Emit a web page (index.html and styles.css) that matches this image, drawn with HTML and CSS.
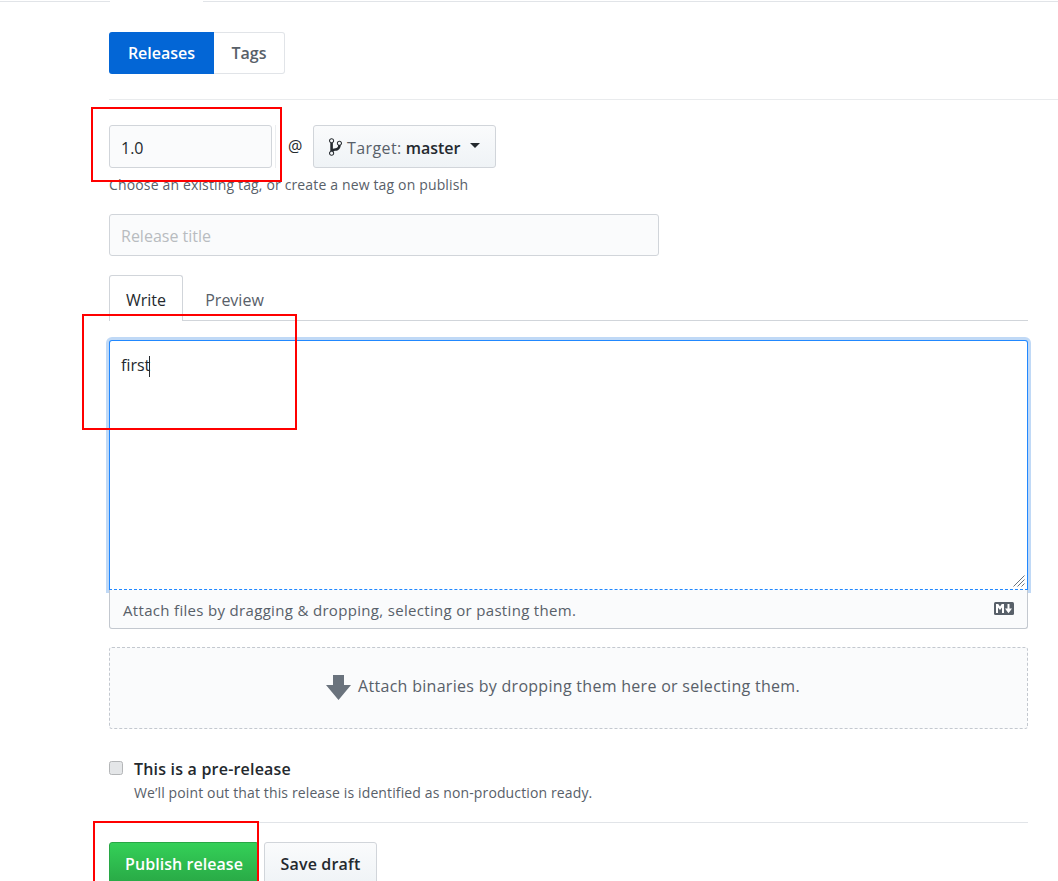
FILE: index.html
```html
<!DOCTYPE html>
<html lang="en">
<head>
<meta charset="utf-8">
<title>New release</title>
<link rel="stylesheet" href="styles.css">
</head>
<body>
<div class="topline"><span class="topline-gap"></span></div>
<main class="page">
  <nav class="subnav">
    <a class="subnav-item selected">Releases</a>
    <a class="subnav-item">Tags</a>
  </nav>
  <hr class="rule-wide">
  <div class="tag-row">
    <input class="field tag-input" value="1.0">
    <span class="tag-sep"></span>
    <span class="at">@</span>
    <button class="btn target">
      <svg class="branch" width="13" height="20" viewBox="0 0 10 16" preserveAspectRatio="none"><path fill="#24292e" fill-rule="evenodd" d="M10 5c0-1.11-.89-2-2-2a1.993 1.993 0 0 0-1 3.72v.3c-.02.52-.23.98-.63 1.38-.4.4-.86.61-1.38.63-.83.02-1.48.16-2 .45V4.72a1.993 1.993 0 0 0-1-3.72C.88 1 0 1.89 0 3a2 2 0 0 0 1 1.72v6.56c-.59.35-1 .99-1 1.72 0 1.11.89 2 2 2 1.11 0 2-.89 2-2 0-.53-.2-1-.53-1.36.09-.06.48-.41.59-.47.25-.11.56-.17.94-.17 1.05-.05 1.95-.45 2.75-1.25S8.95 7.77 9 6.73h-.02C9.59 6.37 10 5.73 10 5zM2 1.8c.66 0 1.2.55 1.2 1.2 0 .65-.55 1.2-1.2 1.2C1.35 4.2.8 3.65.8 3c0-.65.55-1.2 1.2-1.2zm0 12.41c-.66 0-1.2-.55-1.2-1.2 0-.65.55-1.2 1.2-1.2.65 0 1.2.55 1.2 1.2 0 .65-.55 1.2-1.2 1.2zm6-8c-.66 0-1.2-.55-1.2-1.2 0-.65.55-1.2 1.2-1.2.65 0 1.2.55 1.2 1.2 0 .65-.55 1.2-1.2 1.2z"/></svg>
      <span class="target-label">Target:</span><span class="target-name">master</span>
      <span class="caret"></span>
    </button>
  </div>
  <p class="hint">Choose an existing tag, or create a new tag on publish</p>
  <input class="field title-input" placeholder="Release title">
  <div class="tabs">
    <span class="tab active">Write</span>
    <span class="tab">Preview</span>
  </div>
  <div class="editor">
    <div class="textarea"><span class="typed">first</span><span class="cursor"></span>
      <svg class="grip" width="12" height="12" viewBox="0 0 12 12"><path d="M11.5 .5 .5 11.5M11.5 4.5 4.5 11.5M11.5 8.5 8.5 11.5" stroke="#6a737d" stroke-width="1" fill="none"/></svg>
    </div>
    <div class="attach">
      <span>Attach files by dragging &amp; dropping, selecting or pasting them.</span>
      <svg class="md" width="20" height="13" viewBox="0 0 20 13"><rect width="20" height="13" rx="1.5" fill="#586069"/><path fill="#fff" d="M2 11V2h2.2L6 4.6 7.8 2H10v9H8V5.4L6 8 4 5.4V11zM13.5 2h2v4.5H18l-3.5 4.7L11 6.5h2.500z"/></svg>
    </div>
  </div>
  <div class="dropzone">
    <svg class="arrow" width="25" height="25" viewBox="0 0 25 25"><path fill="#6a737d" d="M7 0h11v10h7L12.500 25 0 10h7z"/></svg>
    <span class="drop-text">Attach binaries by dropping them here or selecting them.</span>
  </div>
  <div class="prerelease">
    <span class="checkbox"></span>
    <div>
      <div class="pre-title">This is a pre-release</div>
      <div class="pre-note">We’ll point out that this release is identified as non-production ready.</div>
    </div>
  </div>
  <hr class="rule">
  <div class="actions">
    <button class="btn publish">Publish release</button>
    <button class="btn draft">Save draft</button>
  </div>
</main>
<div class="mark mark-tag"></div>
<div class="mark mark-body"></div>
<div class="mark mark-publish"></div>
</body>
</html>
```
FILE: styles.css
```css
* { box-sizing: border-box; }
html, body { margin: 0; height: 881px; overflow: hidden; background: #fff; }
body { font-family: "Open Sans", "Noto Sans", sans-serif; font-size: 16px; color: #24292e; position: relative; }

.topline { height: 2px; border-bottom: 1px solid #e1e4e8; padding-left: 110px; }
.topline-gap { display: block; width: 93px; height: 2px; background: #fff; }

.page { margin-left: 109px; width: 919px; padding-top: 30px; }

.subnav { display: flex; width: 176px; height: 42px; }
.subnav-item { display: flex; align-items: center; justify-content: center; font-size: 16px; font-weight: 600; color: #586069; border: 1px solid #e1e4e8; border-left: 0; border-radius: 0 3px 3px 0; width: 71px; }
.subnav-item.selected { width: 105px; background: #0366d6; border: 0; border-radius: 3px 0 0 3px; color: #fff; }

.rule-wide { margin: 25px 0 0; width: 949px; height: 1px; border: 0; background: #e9ebed; }
.rule { margin: 0; height: 1px; border: 0; background: #e1e4e8; }

.tag-row { display: flex; margin-top: 25px; height: 43px; align-items: stretch; }
.field { display: block; font: inherit; font-size: 16px; color: #24292e; background: #fafbfc; border: 1px solid #d1d5da; border-radius: 3px; padding: 2px 11px 0; outline: none; }
.field::placeholder { color: #b8bcc0; opacity: 1; }
.tag-input { width: 163px; }
.tag-sep { width: 1px; margin-left: 3px; background: #eceef0; }
.at { width: 37px; padding-left: 12px; font-size: 16px; line-height: 42px; }
.btn { font: inherit; font-weight: 600; font-size: 16px; border: 1px solid #d1d5da; border-radius: 3px; background: linear-gradient(#fafbfc, #eff3f6); color: #24292e; padding: 0; }
.target { width: 183px; display: flex; align-items: center; padding: 2px 0 0 15px; white-space: pre; }
.branch { margin-right: 5px; margin-top: -2px; }
.target-label { color: #586069; font-weight: 400; letter-spacing: .4px; margin-right: 4px; }
.target-name { color: #24292e; }
.caret { margin-left: 10px; margin-top: -4px; border-top: 5px solid #24292e; border-left: 5px solid transparent; border-right: 5px solid transparent; }

.hint { margin: 7px 0 0; font-size: 14px; line-height: 20px; letter-spacing: .15px; color: #586069; }

.title-input { margin-top: 19px; width: 550px; height: 42px; }

.tabs { display: flex; margin-top: 19px; height: 46px; border-bottom: 1px solid #d1d5da; }
.tab { display: flex; align-items: center; justify-content: center; height: 46px; font-size: 16px; color: #586069; width: 103px; padding-top: 4px; }
.tab.active { width: 74px; padding-top: 2px; color: #24292e; background: #fff; border: 1px solid #d1d5da; border-bottom: 0; border-radius: 3px 3px 0 0; }

.editor { margin-top: 19px; }
.textarea { position: relative; height: 250px; background: #fff; border: 1px solid #2188ff; border-bottom: 1px dashed #2188ff; border-radius: 3px 3px 0 0; box-shadow: 0 0 0 3px #c0d9f6; padding: 12px 11px; font-size: 16px; line-height: 24px; }
.cursor { display: inline-block; width: 1px; height: 21px; background: #24292e; vertical-align: middle; margin-left: -1px; }
.grip { position: absolute; right: 2px; bottom: 2px; }
.attach { position: relative; display: flex; align-items: center; justify-content: space-between; height: 39px; padding: 2px 13px 0 13px; background: #fafbfc; border: 1px solid #c3c8cf; border-top: 0; border-radius: 0 0 3px 3px; font-size: 15px; letter-spacing: .32px; color: #586069; }
.md { margin-top: -4px; }

.dropzone { display: flex; align-items: center; justify-content: center; gap: 7px; margin-top: 18px; height: 82px; padding-right: 11px; background: #fafbfc; border: 1px dashed #c3c8cf; border-radius: 3px; font-size: 16px; letter-spacing: .29px; color: #586069; }
.arrow { margin-top: -1px; }
.drop-text { margin-bottom: 4px; }

.prerelease { display: flex; margin-top: 29px; height: 64px; }
.checkbox { width: 14px; height: 14px; margin: 3px 11px 0 0; flex: none; background: #e4e6e8; border: 1px solid #b4b6b8; border-radius: 2.5px; }
.pre-title { font-size: 16px; font-weight: 600; line-height: 22px; letter-spacing: .2px; }
.pre-note { font-size: 14px; line-height: 20px; margin-top: 3px; letter-spacing: .125px; color: #586069; }

.actions { display: flex; gap: 5px; margin-top: 19px; }
.actions .btn { height: 44px; }
.publish { width: 150px; color: #fff; background: linear-gradient(#34d058, #28a745); border-color: #28a745; letter-spacing: .05px; }
.draft { width: 113px; letter-spacing: .15px; }

.mark { position: absolute; border: 2px solid #f00; }
.mark-tag { left: 91px; top: 107px; width: 191px; height: 75px; }
.mark-body { left: 82px; top: 314px; width: 215px; height: 116px; }
.mark-publish { left: 93px; top: 821px; width: 166px; height: 80px; }
```
